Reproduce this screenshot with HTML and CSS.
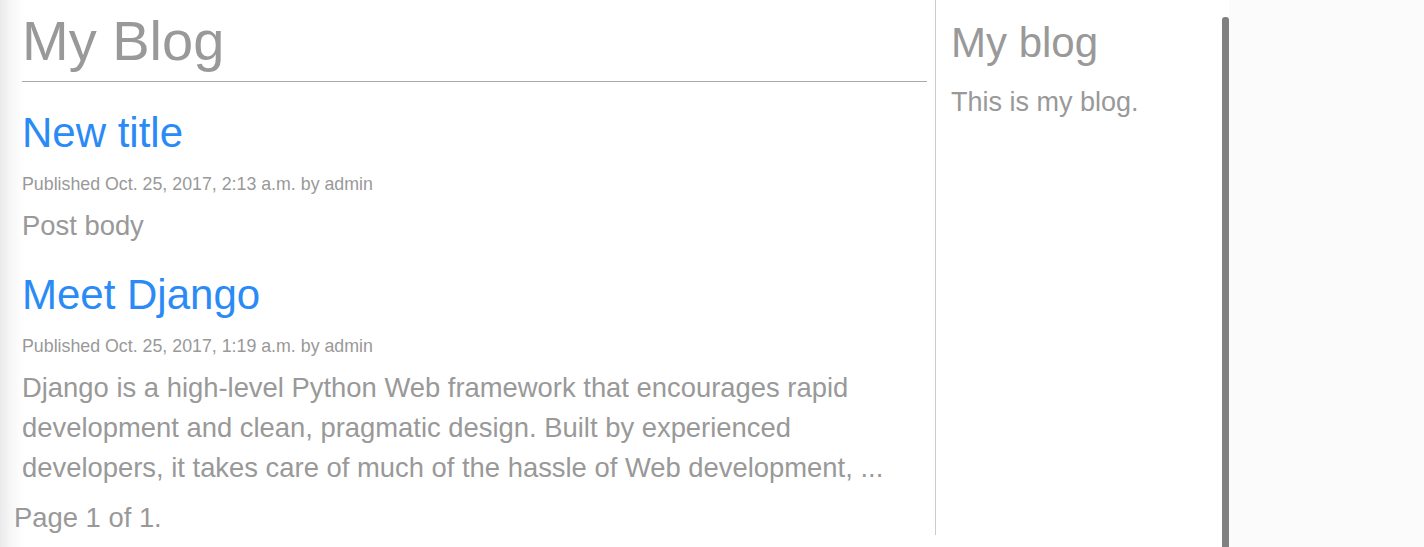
FILE: index.html
```html
<!DOCTYPE html>
<html lang="en">
<head>
<meta charset="utf-8">
<title>My Blog</title>
<link rel="stylesheet" href="styles.css">
</head>
<body>
<div class="window">
  <div class="page">
    <main class="content">
      <h1 class="site-title">My Blog</h1>
      <article class="post">
        <h2 class="post-title"><a href="#">New title</a></h2>
        <p class="date">Published Oct. 25, 2017, 2:13 a.m. by admin</p>
        <div class="post-body">Post body</div>
      </article>
      <article class="post">
        <h2 class="post-title"><a href="#">Meet Django</a></h2>
        <p class="date">Published Oct. 25, 2017, 1:19 a.m. by admin</p>
        <div class="post-body">Django is a high-level Python Web framework that encourages rapid development and clean, pragmatic design. Built by experienced developers, it takes care of much of the hassle of Web development, ...</div>
      </article>
      <p class="pagination">Page 1 of 1.</p>
    </main>
    <aside class="sidebar">
      <h2 class="sidebar-title">My blog</h2>
      <p class="sidebar-text">This is my blog.</p>
    </aside>
    <div class="scrollbar"></div>
  </div>
  <div class="outside"></div>
</div>
</body>
</html>
```

FILE: styles.css
```css
html, body {
  margin: 0;
  padding: 0;
  height: 100%;
}
body {
  font-family: "Liberation Sans", Arial, Helvetica, sans-serif;
  color: #999;
  background: #fafafa;
  overflow: hidden;
}
.window {
  display: flex;
  height: 547px;
}
.page {
  display: flex;
  width: 1229px;
  background: linear-gradient(to right, #eaeaea 0, #f6f6f6 10px, #fff 24px);
}
.content {
  width: 905px;
  padding-left: 22px;
  margin-right: 8px;
}
.site-title {
  margin: 9px 0 0;
  font-size: 56px;
  font-weight: normal;
  line-height: 64px;
  padding-bottom: 8px;
  border-bottom: 1px solid #aaa;
}
.post-title {
  margin: 27px 0 0;
  font-size: 42px;
  font-weight: normal;
  line-height: 48px;
}
.post + .post .post-title {
  margin-top: 25px;
}
.post-title a {
  color: #2a8bf6;
  text-decoration: none;
}
.date {
  margin: 16px 0 0;
  font-size: 17.8px;
  line-height: 22px;
}
.post-body {
  margin-top: 11px;
  font-size: 27.4px;
  line-height: 40px;
}
.pagination {
  margin: 10px 0 0 -8px;
  font-size: 27.4px;
  line-height: 40px;
}
.sidebar {
  width: 271px;
  height: 535px;
  border-left: 1px solid #ccc;
  padding-left: 15px;
}
.sidebar-title {
  margin: 19px 0 0;
  font-size: 42px;
  font-weight: normal;
  line-height: 48px;
}
.sidebar-text {
  margin: 15px 0 0;
  font-size: 27px;
  line-height: 40px;
}
.scrollbar {
  width: 7px;
  margin-top: 17px;
  background: #808080;
  border-radius: 3px 3px 0 0;
}
.outside {
  flex: 1;
  background: #fbfbfb;
}
```
